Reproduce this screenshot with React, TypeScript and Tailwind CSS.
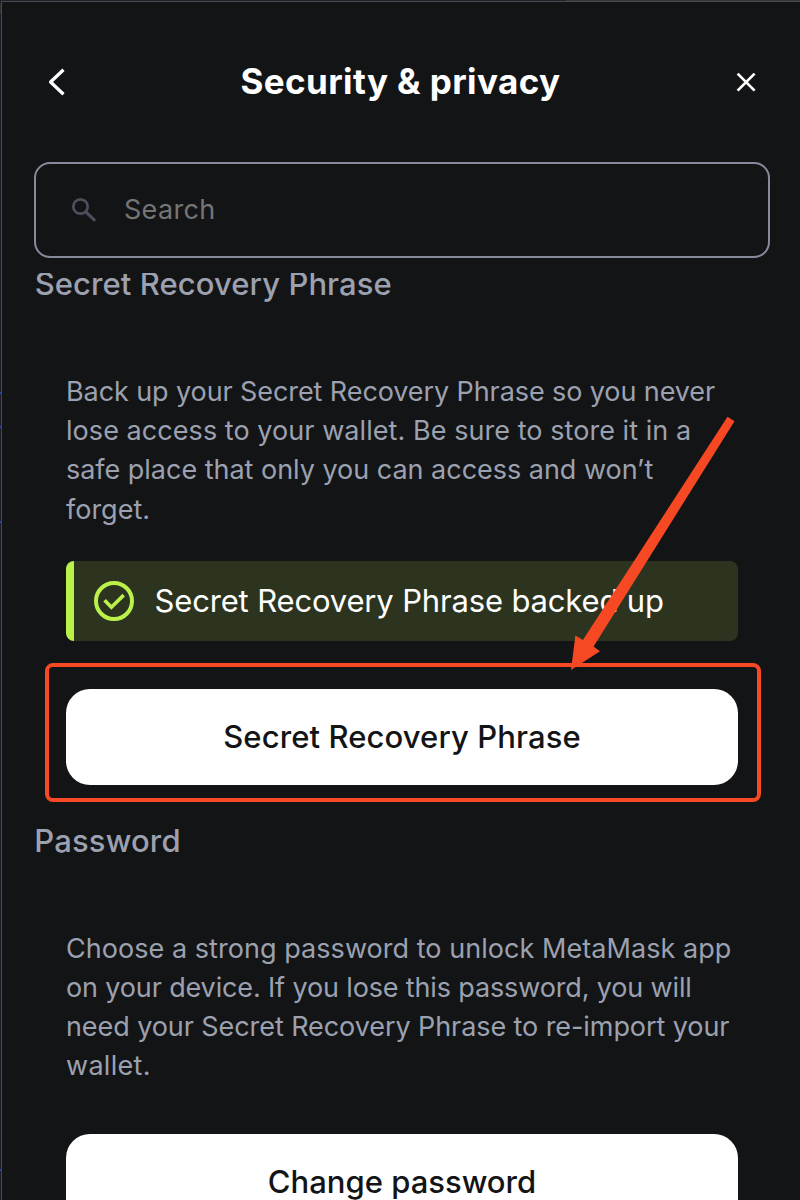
import React from 'react';

type TextLine = { text: string; className: string };

const backupLines: TextLine[] = [
  { text: 'Back up your Secret Recovery Phrase so you never', className: 'tracking-[-0.092px]' },
  { text: 'lose access to your wallet. Be sure to store it in a', className: 'tracking-[0.057px]' },
  { text: 'safe place that only you can access and won’t', className: 'tracking-[-0.021px]' },
  { text: 'forget.', className: 'tracking-[0px]' },
];

const passwordLines: TextLine[] = [
  { text: 'Choose a strong password to unlock MetaMask app', className: 'tracking-[0.046px]' },
  { text: 'on your device. If you lose this password, you will', className: 'tracking-[-0.143px]' },
  { text: 'need your Secret Recovery Phrase to re-import your', className: 'tracking-[-0.078px]' },
  { text: 'wallet.', className: 'tracking-[0.3px]' },
];

function Paragraph({ lines }: { lines: TextLine[] }) {
  return (
    <p className="h-[157px] whitespace-nowrap text-[27px] leading-[39.2px] text-[#9ca1b0]">
      {lines.map((line) => (
        <span key={line.text} className={`block ${line.className}`}>
          {line.text}
        </span>
      ))}
    </p>
  );
}

function Arrow() {
  return (
    <svg className="pointer-events-none absolute top-[410px] left-[560px]" width="180" height="265" viewBox="560 410 180 265" fill="#f64823">
      <path d="M727.5 416.8 L734.5 421.2 L593.6 646.5 L600 651.2 L571 670 L575.4 635.6 L582.9 639.9 Z" />
    </svg>
  );
}

export default function App() {
  return (
    <div className="relative flex h-[1200px] w-[800px] flex-col overflow-hidden bg-[#131416] font-['Inter',sans-serif]">
      <div className="flex h-px shrink-0">
        <div className="w-[566px] bg-[#222127]" />
        <div className="flex-1 bg-[#35353a]" />
      </div>
      <div className="flex min-h-0 flex-1">
        <div className="flex w-px shrink-0 flex-col bg-[#1b1a27]">
          <div className="mt-[3px] h-[10px] bg-[#303033]" />
          <div className="mt-[378px] h-[2px] bg-[#2440a8]" />
          <div className="mt-[32px] h-[2px] bg-[#2440a8]" />
          <div className="mt-[93px] h-[2px] bg-[#2440a8]" />
          <div className="mt-[646px] h-[2px] bg-[#2440a8]" />
        </div>
        <main className="flex min-w-0 flex-1 flex-col border-t border-l border-[#484850]">
          <header className="flex h-[160px] shrink-0 items-center justify-between pr-[42px] pl-[43px] text-white">
            <button aria-label="Back" className="flex">
              <svg width="24" height="30" viewBox="45 67 24 30" fill="none" stroke="currentColor" strokeWidth="3.3" strokeLinejoin="round">
                <path d="M63.5 69.7 L50.6 82 L63.5 94.2" />
              </svg>
            </button>
            <h1 className="-mt-[3px] mr-[2px] text-[35px] leading-[44px] font-bold tracking-[0.4px] whitespace-nowrap">Security &amp; privacy</h1>
            <button aria-label="Close" className="flex">
              <svg width="24" height="24" viewBox="734 70 24 24" fill="none" stroke="currentColor" strokeWidth="2.7">
                <path d="M737.6 73.6 L754.6 90.6 M754.6 73.6 L737.6 90.6" />
              </svg>
            </button>
          </header>

          <div className="mr-[30px] ml-[32px] flex h-[96px] shrink-0 items-center rounded-2xl border-2 border-[#858b9a] pl-[32px]">
            <svg width="32" height="32" viewBox="68 194 32 32" fill="none" stroke="#4b505c" strokeWidth="2.7">
              <circle cx="80.5" cy="206.5" r="7.2" />
              <path d="M85.8 211.8 L95.2 220.8" strokeWidth="3" />
            </svg>
            <span className="ml-[24px] text-[27px] leading-[36px] tracking-[0.3px] text-[#757575]">Search</span>
          </div>

          <div className="mt-[15px] min-h-0 flex-1 overflow-hidden">
            <h2 className="-mt-[9px] ml-[32.7px] text-[31px] leading-[40px] font-medium tracking-[0.08px] whitespace-nowrap text-[#9ca1b0]">Secret Recovery Phrase</h2>
            <section className="mt-[68px] mr-[62px] ml-[64px]">
              <Paragraph lines={backupLines} />
              <div className="mt-[32px] flex h-[80px] items-center overflow-hidden rounded-lg border-l-8 border-[#baf24a] bg-[#2c3420] pl-[20px]">
                <svg width="40" height="40" viewBox="94 581 40 40" fill="none" stroke="#baf24a" strokeWidth="4">
                  <circle cx="114" cy="601" r="18" />
                  <path d="M104.6 600.2 L111.4 607.3 L123.7 595.1" strokeWidth="3.6" />
                </svg>
                <span className="ml-[20.5px] text-[31px] leading-[40px] tracking-[-0.158px] whitespace-nowrap text-white">Secret Recovery Phrase backed up</span>
              </div>
              <div className="relative mt-[48px]">
                <button className="flex h-[96px] w-full items-center justify-center rounded-3xl bg-white text-[31px] leading-[40px] font-medium tracking-[0.1px] text-[#131416]">Secret Recovery Phrase</button>
                <div className="pointer-events-none absolute -top-[26px] -right-[23px] -bottom-[17px] -left-[21px] rounded-lg border-4 border-[#f64823]" />
              </div>
            </section>

            <h2 className="mt-[36px] ml-[32.3px] text-[31px] leading-[40px] font-medium tracking-[0.15px] text-[#9ca1b0]">Password</h2>
            <section className="mt-[67.6px] mr-[62px] ml-[64px]">
              <Paragraph lines={passwordLines} />
              <button className="mt-[48.4px] flex h-[96px] w-full items-center justify-center rounded-3xl bg-white text-[31px] leading-[40px] font-medium tracking-[0px] text-[#131416]">Change password</button>
            </section>
          </div>
        </main>
      </div>
      <Arrow />
    </div>
  );
}
